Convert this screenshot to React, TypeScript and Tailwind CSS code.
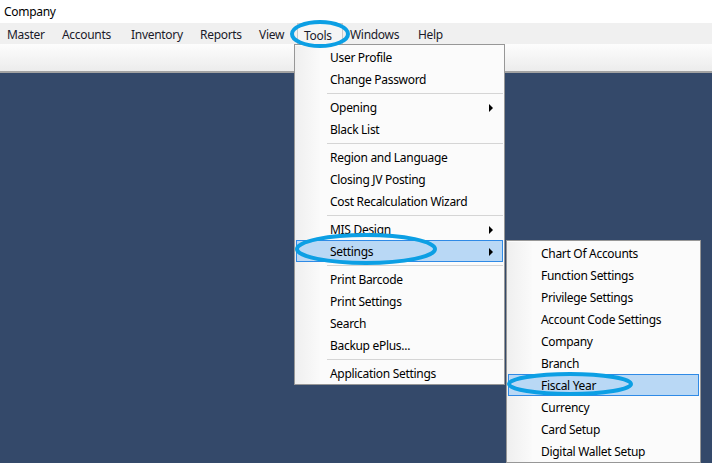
import React from "react";

type Item = { label: string; arrow?: boolean; active?: boolean } | "sep";

const toolsItems: Item[] = [
  { label: "User Profile" },
  { label: "Change Password" },
  "sep",
  { label: "Opening", arrow: true },
  { label: "Black List" },
  "sep",
  { label: "Region and Language" },
  { label: "Closing JV Posting" },
  { label: "Cost Recalculation Wizard" },
  "sep",
  { label: "MIS Design", arrow: true },
  { label: "Settings", arrow: true, active: true },
  "sep",
  { label: "Print Barcode" },
  { label: "Print Settings" },
  { label: "Search" },
  { label: "Backup ePlus..." },
  "sep",
  { label: "Application Settings" },
];

const settingsItems: Item[] = [
  { label: "Chart Of Accounts" },
  { label: "Function Settings" },
  { label: "Privilege Settings" },
  { label: "Account Code Settings" },
  { label: "Company" },
  { label: "Branch" },
  { label: "Fiscal Year", active: true },
  { label: "Currency" },
  { label: "Card Setup" },
  { label: "Digital Wallet Setup" },
];

function Arrow() {
  return (
    <svg width="4" height="8" viewBox="0 0 4 8" className="absolute right-[9px] top-[7px]">
      <polygon points="0,0 4,4 0,8" fill="#000" />
    </svg>
  );
}

function Menu({ items, textLeft }: { items: Item[]; textLeft: number }) {
  return (
    <div className="relative flex flex-col">
      <div className="absolute left-0 top-0 bottom-0 w-[25px] bg-gradient-to-r from-[#efefef] to-[#fafafa]" />
      {items.map((it, i) =>
        it === "sep" ? (
          <div key={i} className="relative h-[6px] flex items-center pl-[32px] pr-0">
            <div className="h-[1px] w-full bg-[#d5d5d5]" />
          </div>
        ) : (
          <div
            key={i}
            className={
              it.active
                ? "relative h-[22px] ml-[1px] flex items-center border border-[#2f8ae6] bg-[#b9d8f5]"
                : "relative h-[22px] ml-[1px] flex items-center border border-transparent"
            }
          >
            <span style={{ paddingLeft: textLeft }} className="whitespace-nowrap pt-[2px]">
              {it.label}
            </span>
            {it.arrow && <Arrow />}
          </div>
        )
      )}
    </div>
  );
}

const bar = [
  { label: "Master", w: "w-[55px]" },
  { label: "Accounts", w: "w-[69px]" },
  { label: "Inventory", w: "w-[69px]" },
  { label: "Reports", w: "w-[59px]" },
  { label: "View", w: "w-[45px]" },
  { label: "Tools", w: "w-[46px]", open: true },
  { label: "Windows", w: "w-[68px]" },
  { label: "Help", w: "w-[40px]" },
];

export default function App() {
  return (
    <div
      className="relative w-[712px] h-[463px] overflow-hidden bg-[#34496a] text-[12px] tracking-[-0.3px] text-black flex flex-col"
      style={{ fontFamily: '"Noto Sans", "Open Sans", sans-serif' }}
    >
      <div className="h-[23px] bg-white flex items-center pl-[4px] pt-[1px] shrink-0">Company</div>
      <div className="h-[21px] bg-[#f0f0f0] flex items-center shrink-0">
        {bar.map((b) => (
          <div
            key={b.label}
            className={
              (b.open
                ? "border-l border-r border-t border-[#c8c8c8] bg-[#f5f5f5] "
                : "border border-transparent ") +
              b.w +
              " h-[21px] flex items-center px-[6px] pt-[3px] text-[#1a1a2a]"
            }
          >
            {b.label}
          </div>
        ))}
      </div>
      <div className="h-[27px] shrink-0 bg-gradient-to-b from-[#fdfdfd] to-[#ececec]" />
      <div className="h-[2px] shrink-0 bg-[#a3a3a3]" />
      <div className="flex-1 bg-[#34496a]" />

      {/* Tools dropdown */}
      <div className="absolute left-[294px] top-[44px] w-[211px] bg-[#fbfbfb] border border-[#979797] pt-[1px] pb-0 pr-[1px]">
        <Menu items={toolsItems} textLeft={33} />
      </div>

      {/* Settings submenu */}
      <div className="absolute left-[506px] top-[240px] w-[195px] bg-[#fbfbfb] border border-[#979797] pt-[1px] pr-[1px]">
        <Menu items={settingsItems} textLeft={32} />
      </div>

      {/* Annotation ellipses */}
      <svg className="absolute inset-0 pointer-events-none" width="712" height="463">
        <ellipse cx="320" cy="34" rx="28" ry="12" fill="none" stroke="#0c9fe4" strokeWidth="4" />
        <ellipse cx="366" cy="249" rx="69" ry="14" fill="none" stroke="#0c9fe4" strokeWidth="4" />
        <ellipse cx="570" cy="384" rx="61" ry="10" fill="none" stroke="#0c9fe4" strokeWidth="4" />
      </svg>
    </div>
  );
}
